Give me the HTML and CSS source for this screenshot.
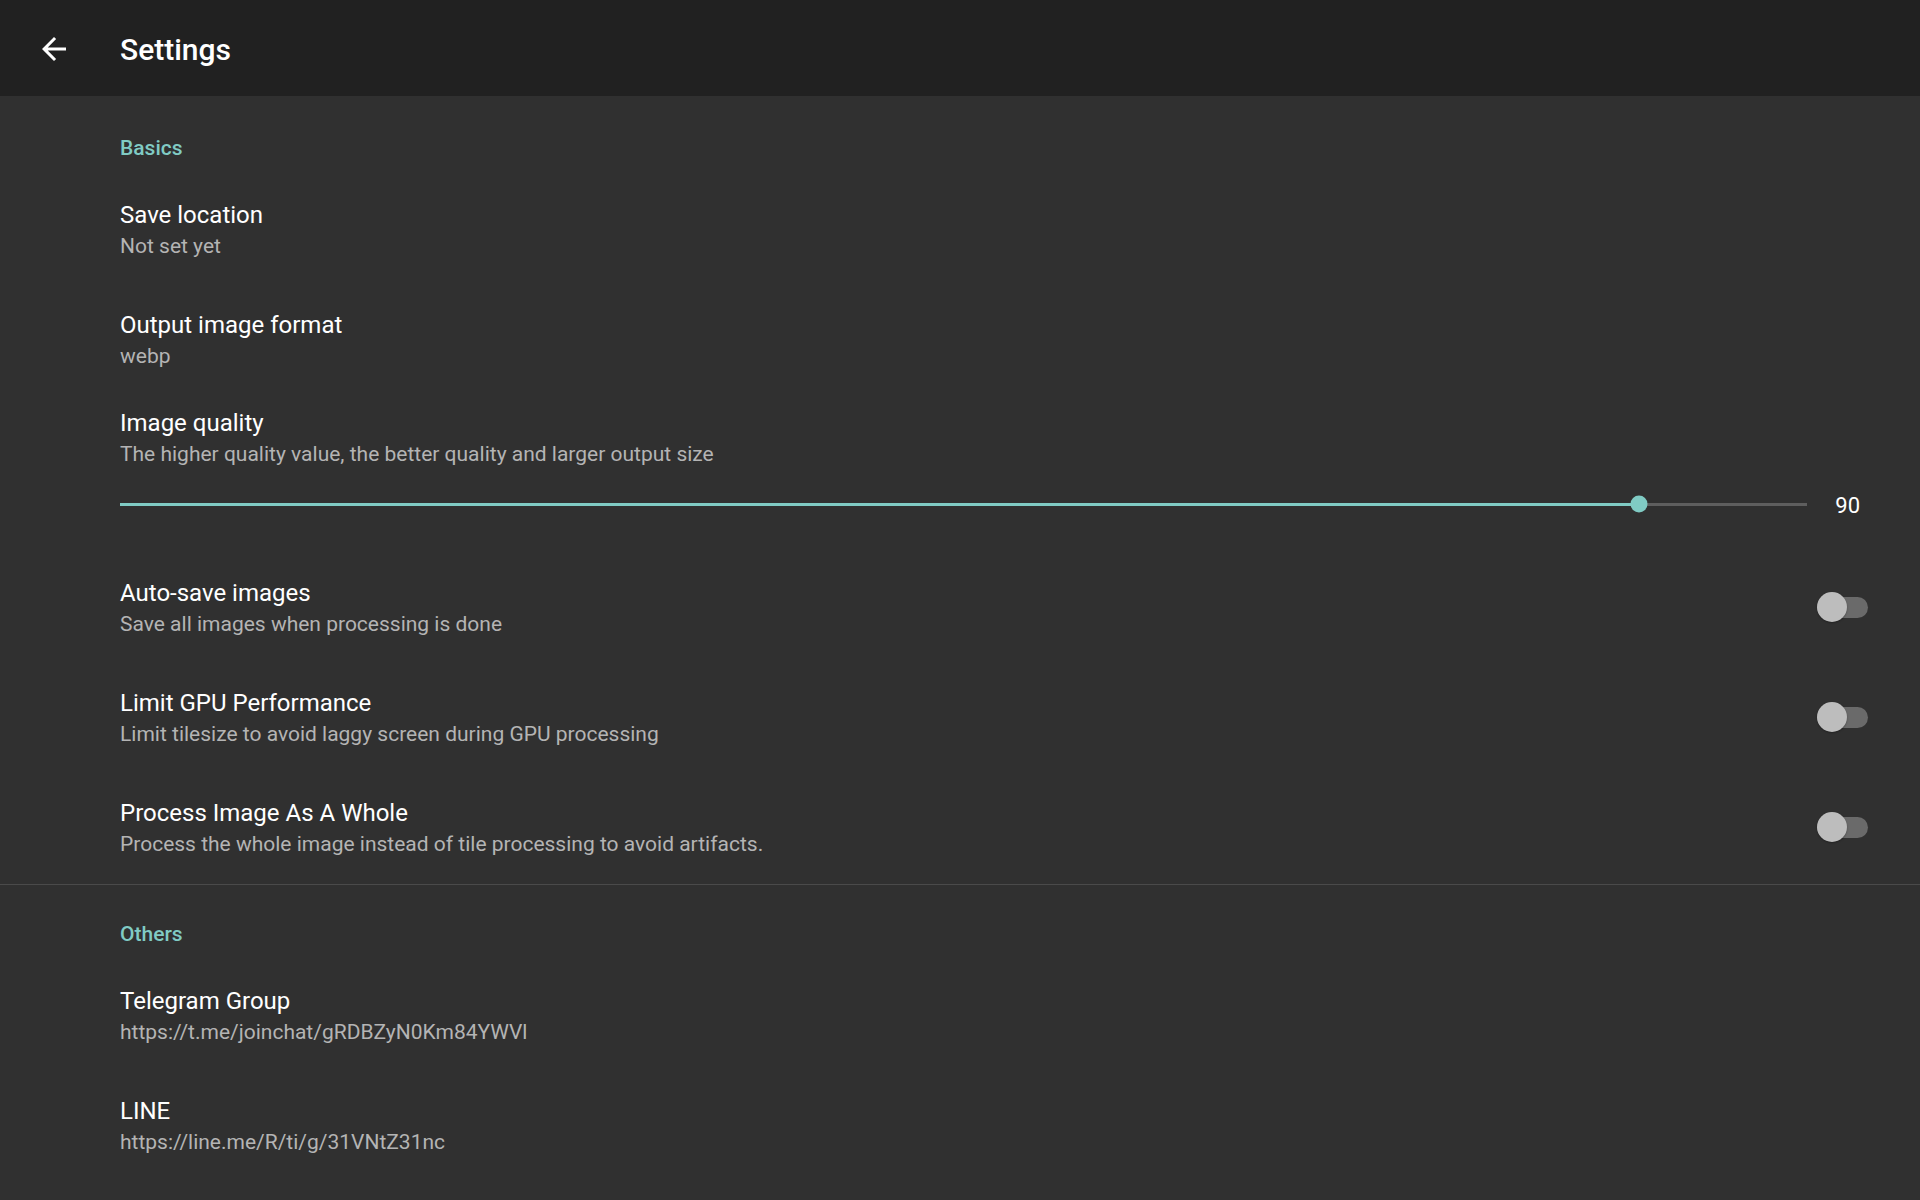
FILE: index.html
```html
<!DOCTYPE html>
<html>

<head>
  <meta charset="utf-8" />
  <title>Settings</title>
  <link rel="stylesheet" href="styles.css">
</head>

<body>
  <div class="toolbar">
    <svg class="back" viewBox="0 0 24 24" width="36" height="36">
      <path d="M20 11H7.83l5.59-5.59L12 4l-8 8 8 8 1.41-1.41L7.83 13H20v-2z" fill="#ffffff" />
    </svg>
    <span class="toolbar-title">Settings</span>
  </div>

  <div class="list">
    <div class="group">
      <div class="category first">Basics</div>

      <div class="pref">
        <div class="text">
          <div class="title">Save location</div>
          <div class="summary">Not set yet</div>
        </div>
      </div>

      <div class="pref">
        <div class="text">
          <div class="title">Output image format</div>
          <div class="summary">webp</div>
        </div>
      </div>

      <div class="pref seek">
        <div class="text">
          <div class="title">Image quality</div>
          <div class="summary">The higher quality value, the better quality and larger output size</div>
        </div>
        <div class="seekrow">
          <div class="track">
            <div class="fill" style="width: 90%"></div>
            <span class="knob" style="left: 90%"></span>
          </div>
          <span class="value">90</span>
        </div>
      </div>

      <div class="pref">
        <div class="text">
          <div class="title">Auto-save images</div>
          <div class="summary">Save all images when processing is done</div>
        </div>
        <span class="switch"><span class="thumb"></span></span>
      </div>

      <div class="pref">
        <div class="text">
          <div class="title">Limit GPU Performance</div>
          <div class="summary">Limit tilesize to avoid laggy screen during GPU processing</div>
        </div>
        <span class="switch"><span class="thumb"></span></span>
      </div>

      <div class="pref">
        <div class="text">
          <div class="title">Process Image As A Whole</div>
          <div class="summary">Process the whole image instead of tile processing to avoid artifacts.</div>
        </div>
        <span class="switch"><span class="thumb"></span></span>
      </div>
    </div>

    <div class="divider"></div>

    <div class="group">
      <div class="category">Others</div>

      <div class="pref">
        <div class="text">
          <div class="title">Telegram Group</div>
          <div class="summary">https://t.me/joinchat/gRDBZyN0Km84YWVl</div>
        </div>
      </div>

      <div class="pref">
        <div class="text">
          <div class="title">LINE</div>
          <div class="summary">https://line.me/R/ti/g/31VNtZ31nc</div>
        </div>
      </div>
    </div>
  </div>
</body>

</html>
```

FILE: styles.css
```css
html {
  width: 100%;
  height: 100%;
}

body {
  width: 100%;
  height: 100%;
  margin: 0;
  padding: 0;
  background: #303030;
  font-family: Roboto, "Noto Sans", sans-serif;
  color: #ffffff;
  overflow: hidden;
}

.toolbar {
  height: 96px;
  background: #212121;
  display: flex;
  align-items: center;
}

.toolbar .back {
  margin-left: 36px;
  margin-top: 2px;
}

.toolbar-title {
  margin-left: 48px;
  margin-top: 3px;
  font-size: 30px;
  font-weight: 500;
  line-height: 36px;
}

.list {
  padding-top: 1px;
}

.category {
  padding: 34px 120px 13px;
  font-size: 21px;
  font-weight: 500;
  line-height: 30px;
  color: #80cbc4;
}

.category.first {
  padding-top: 36px;
}

.pref {
  display: flex;
  align-items: center;
  justify-content: space-between;
  padding: 24px 52px 24px 120px;
}

.title {
  font-size: 24px;
  line-height: 31px;
  color: #ffffff;
}

.summary {
  font-size: 21px;
  line-height: 31px;
  color: #b4b4b4;
}

/* seekbar preference */
.pref.seek {
  display: block;
  padding: 12px 60px 26px 120px;
}

.seekrow {
  display: flex;
  align-items: center;
  height: 48px;
  margin-top: 10px;
}

.track {
  flex: 1;
  position: relative;
  height: 3px;
  background: #5e5e5e;
  margin-right: 28px;
}

.track .fill {
  height: 100%;
  background: #80cbc4;
}

.track .knob {
  position: absolute;
  top: 50%;
  width: 17px;
  height: 17px;
  border-radius: 50%;
  background: #80cbc4;
  transform: translate(-50%, -50%);
}

.value {
  margin-top: 4px;
  font-size: 22px;
  line-height: 30px;
  color: #ffffff;
}

/* switch */
.switch {
  position: relative;
  display: block;
  width: 51px;
  height: 21px;
  margin-top: -4px;
  border-radius: 11px;
  background: #6a6a6a;
}

.switch .thumb {
  position: absolute;
  left: 0;
  top: 50%;
  width: 30px;
  height: 30px;
  border-radius: 50%;
  background: #bdbdbd;
  transform: translateY(-50%);
  box-shadow: 0 1px 2px rgba(0, 0, 0, 0.3);
}

.divider {
  height: 1px;
  background: #4a4a4a;
}
```
